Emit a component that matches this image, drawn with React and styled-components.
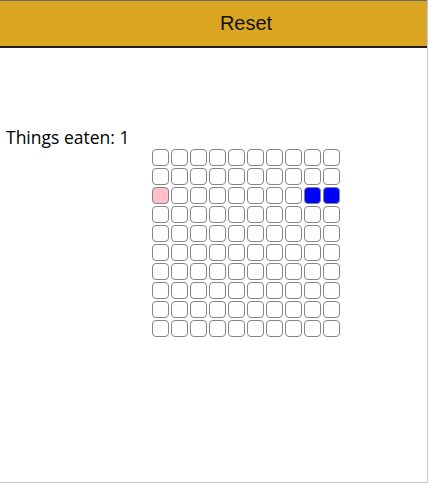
import React from 'react';
import styled, { createGlobalStyle } from 'styled-components';

const GRID_SIZE = 10;
const FOOD = [{ row: 2, col: 0 }];
const SNAKE = [
  { row: 2, col: 8 },
  { row: 2, col: 9 }
];

const GlobalStyle = createGlobalStyle`
  html, body {
    margin: 0;
    padding: 0;
    background: #fff;
  }
`;

const Frame = styled.div`
  width: 428px;
  height: 483px;
  box-sizing: border-box;
  border-right: 1px solid #c8c8c8;
  border-bottom: 1px solid #c8c8c8;
  overflow: hidden;
`;

const Stage = styled.div`
  width: 492px;
`;

const ResetButton = styled.button`
  display: block;
  width: 100%;
  height: 48px;
  margin: 0;
  padding: 0;
  box-sizing: border-box;
  border: none;
  border-top: 1px solid #6b6b6b;
  border-bottom: 2px solid #1f1f1f;
  background-color: #daa520;
  color: #111;
  font-family: 'Liberation Sans', Arial, sans-serif;
  font-size: 20px;
  text-align: center;
  cursor: pointer;
`;

const Board = styled.div`
  padding-top: 78px;
`;

const Score = styled.div`
  padding-left: 6px;
  font-family: 'Open Sans', 'Noto Sans', sans-serif;
  font-size: 17.5px;
  font-weight: 500;
  line-height: 22px;
  color: #000;
`;

const Grid = styled.div`
  display: grid;
  grid-template-columns: repeat(${({ size }) => size}, 19px);
  width: 190px;
  margin: 0 auto;
`;

const Cell = styled.div`
  width: 15px;
  height: 15px;
  margin: 1px;
  border: 1px solid #858585;
  border-radius: 4px;
  background-color: ${({ kind }) =>
    kind === 'snake' ? '#0000ff' : kind === 'food' ? '#ffc0cb' : '#fff'};
`;

const cellKind = (row, col) => {
  if (SNAKE.some(s => s.row === row && s.col === col)) return 'snake';
  if (FOOD.some(f => f.row === row && f.col === col)) return 'food';
  return 'empty';
};

const App = () => {
  const cells = [];
  for (let row = 0; row < GRID_SIZE; row++) {
    for (let col = 0; col < GRID_SIZE; col++) {
      cells.push(<Cell key={`${row}-${col}`} kind={cellKind(row, col)} />);
    }
  }
  return (
    <Frame>
      <GlobalStyle />
      <Stage>
        <ResetButton>Reset</ResetButton>
        <Board>
          <Score>Things eaten: 1</Score>
          <Grid size={GRID_SIZE}>{cells}</Grid>
        </Board>
      </Stage>
    </Frame>
  );
};

export default App;
